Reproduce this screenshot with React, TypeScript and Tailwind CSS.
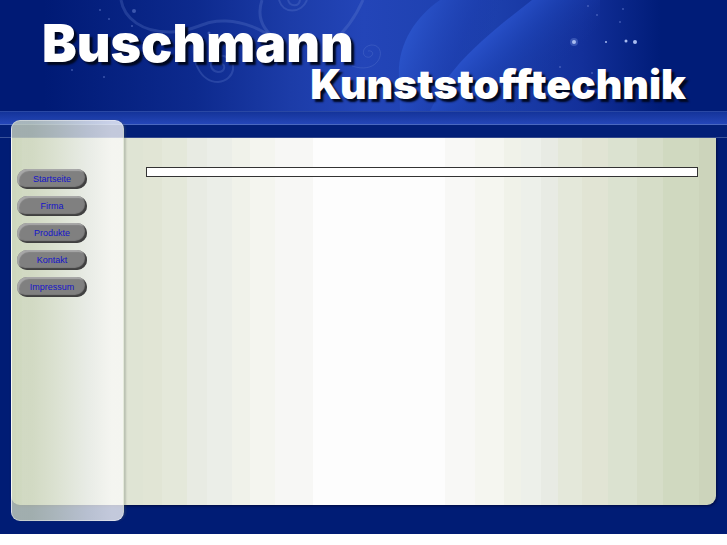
const links = ["Startseite", "Firma", "Produkte", "Kontakt", "Impressum"];

// light in the middle, olive towards both edges, in flat bands
const panelBands: [string, number][] = [
  ["#cdd6bb", 5], ["#d6dec8", 11], ["#dfe4d4", 132], ["#e1e5d5", 151], ["#e4e8da", 176],
  ["#e8ebe3", 196], ["#ebeee8", 221], ["#f0f2ea", 239], ["#f4f5ef", 264], ["#f7f7f5", 302],
  ["#fdfdfd", 434], ["#f8f8f6", 464], ["#f5f6f0", 493], ["#f0f2e9", 510], ["#edf0ea", 530],
  ["#e8ebe4", 547], ["#e4e8da", 571], ["#e1e4d4", 597], ["#dbe2d0", 626], ["#d6ddc8", 652],
  ["#d0d9c0", 688], ["#ccd4bb", 705],
];

function bands(list: [string, number][], total: number) {
  let from = 0;
  const stops = list.map(([color, to]) => {
    const stop = `${color} ${(from / total) * 100}% ${(to / total) * 100}%`;
    from = to;
    return stop;
  });
  return `linear-gradient(to right, ${stops.join(", ")})`;
}

function HeaderArt() {
  return (
    <svg
      aria-hidden="true"
      className="absolute inset-0 h-full w-full"
      viewBox="0 0 727 111"
      preserveAspectRatio="none"
    >
      <defs>
        <linearGradient id="leaf" gradientUnits="userSpaceOnUse" x1="405" y1="30" x2="480" y2="60">
          <stop offset="0" stopColor="#2b55cc" />
          <stop offset="0.7" stopColor="#1d3fb0" stopOpacity="0.6" />
          <stop offset="1" stopColor="#1a3aa8" stopOpacity="0" />
        </linearGradient>
        <linearGradient id="leaf2" gradientUnits="userSpaceOnUse" x1="490" y1="32" x2="545" y2="85">
          <stop offset="0" stopColor="#2850c8" />
          <stop offset="0.4" stopColor="#1d42b4" stopOpacity="0.7" />
          <stop offset="1" stopColor="#15349c" stopOpacity="0" />
        </linearGradient>
      </defs>
      <path d="M440 0C414 18 397 46 399 78L400 111H450C470 80 500 40 540 0Z" fill="url(#leaf)" />
      <path d="M532 0C500 25 468 50 446 80L430 111H600V0Z" fill="url(#leaf2)" />
      <g fill="none" stroke="#6f8ad8" strokeOpacity="0.25" strokeWidth="2">
        <path d="M121 0C124 18 142 33 172 32C198 31 202 20 226 21C248 22 262 31 278 40" strokeWidth="3" />
        <path d="M262 0C256 18 264 32 280 42M363 0C355 18 346 31 332 42" strokeWidth="3" />
        <path d="M196 33C188 62 202 82 218 82C236 80 238 60 224 56C210 54 206 70 218 72C226 72 226 63 220 64" />
        <path d="M279 0C283 14 301 14 307 0M288 0C290 7 299 7 300 0" />
        <path d="M352 66C382 76 388 44 371 45C360 47 362 59 370 57C375 54 372 50 368 51" strokeWidth="1" />
      </g>
      <circle cx="574" cy="42" r="4" fill="#6f8ad8" fillOpacity="0.4" />
      <g fill="#a9bcf0">
        <circle cx="574" cy="42" r="2" />
        <circle cx="606" cy="42" r="1" />
        <circle cx="626" cy="41" r="1.5" />
        <circle cx="635" cy="42" r="2" />
      </g>
      <g fill="#6f8ad8" fillOpacity="0.5">
        <circle cx="588" cy="6" r="1" />
        <circle cx="597" cy="15" r="1" />
        <circle cx="623" cy="9" r="1" />
        <circle cx="620" cy="22" r="1" />
        <circle cx="560" cy="67" r="1" />
        <circle cx="592" cy="73" r="1" />
        <circle cx="100" cy="10" r="1" />
        <circle cx="134" cy="11" r="2" />
        <circle cx="109" cy="19" r="1" />
        <circle cx="132" cy="26" r="1" />
        <circle cx="72" cy="70" r="1" />
        <circle cx="104" cy="77" r="1" />
        <circle cx="209" cy="33" r="1.5" />
      </g>
    </svg>
  );
}

function Header() {
  return (
    <header>
      <div className="relative h-[111px] bg-[linear-gradient(to_right,#001a75_6%,#0d2a8e_27%,#1c3ca8_40%,#2345b8_50%,#1c3fac_68%,#13309a_80%,#001c78_91%)]">
        <HeaderArt />
        <h1 className="relative flex flex-col pt-4 font-['Inter',sans-serif] font-black text-white [text-shadow:3px_3px_2px_#000820]">
          <span className="pl-[42px] text-[52px] leading-[56px]">Buschmann</span>
          <span className="-mt-2 pr-[41px] text-right text-[41px] leading-[40px]">Kunststofftechnik</span>
        </h1>
      </div>
      <div className="h-[14px] border-t border-b border-t-[#2a48a4] border-b-[#4a68c0] bg-linear-to-b from-[#14349a] to-[#2446b8]" />
      <div className="h-[13px] border-b border-[#3a539a] bg-[#021f78]" />
    </header>
  );
}

function Sidebar() {
  return (
    <aside className="-mt-[18px] -mb-4 min-h-[401px] w-[113px] shrink-0 rounded-[9px] border border-white/40 bg-[linear-gradient(to_right,rgba(206,215,190,0.78)_18%,rgba(217,224,206,0.78)_38%,rgba(235,238,234,0.78)_68%,rgba(250,250,248,0.78)_90%)] pt-12 pl-[5px] shadow-[2px_0_2px_rgba(80,90,80,0.25)]">
      <nav>
        <ul className="flex flex-col gap-[7px]">
          {links.map((label) => (
            <li key={label}>
              <a
                href="#"
                className="flex h-5 w-[70px] items-center justify-center rounded-full bg-[#808080] font-['Liberation_Sans',sans-serif] text-[9px] leading-3 text-[#1414c8] shadow-[inset_-2px_-2px_1px_#404040,inset_2px_2px_1px_#a8a8a8]"
              >
                {label}
              </a>
            </li>
          ))}
        </ul>
      </nav>
    </aside>
  );
}

export default function App() {
  return (
    <div className="bg-white pb-[11px]">
      <div className="bg-[#001c75] pb-[29px]">
        <Header />
        <div
          className="mx-[11px] flex rounded-b-[9px] shadow-[1px_1px_3px_#000c40]"
          style={{ backgroundImage: bands(panelBands, 705) }}
        >
          <Sidebar />
          <main className="min-w-0 flex-1 pt-[29px] pr-[18px] pl-[22px]">
            <div className="h-[10px] border border-[#333] bg-white" />
          </main>
        </div>
      </div>
    </div>
  );
}
